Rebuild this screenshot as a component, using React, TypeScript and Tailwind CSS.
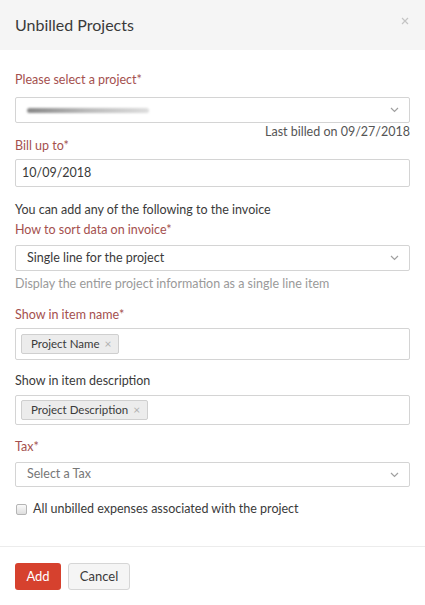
import { useState } from "react";

const labelCls = "h-[16px] text-[12.5px] leading-[16px] text-[#a4504e]";
const plainLabelCls = "h-[16px] text-[12.5px] leading-[16px] text-[#3a3a3a]";

function Chevron() {
    return (
        <svg width="9" height="6" viewBox="0 0 9 6" className="shrink-0">
            <path d="M1 1l3.5 3.5L8 1" fill="none" stroke="#a0a0a0" strokeWidth="1.2" />
        </svg>
    );
}

function SelectBox({ children, height }: { children: React.ReactNode; height: string }) {
    return (
        <div className={`flex items-center justify-between rounded-[2px] border border-[#d4d4d4] bg-white pr-[10px] pl-[11px] ${height}`}>
            <div className="text-[12.5px] text-[#3a3a3a]">{children}</div>
            <Chevron />
        </div>
    );
}

function Chip({ label }: { label: string }) {
    return (
        <span className="inline-flex h-[20px] items-center rounded-[2px] border border-[#cfcfcf] bg-[#ececec] pr-[7px] pl-[9px] text-[11.5px] text-[#3a3a3a]">
            {label}
            <span className="ml-[5px] text-[12px] text-[#b0b0b0]">×</span>
        </span>
    );
}

export default function App() {
    const [checked, setChecked] = useState(false);
    return (
        <div className="h-[605px] w-[425px] bg-white font-['Lato','Liberation_Sans',sans-serif] text-[#3a3a3a]">
            <div className="flex h-[50px] items-center justify-between bg-[#f5f5f5] pr-[16px] pl-[15px]">
                <h1 className="text-[16px] font-normal text-[#3a3a3a]">Unbilled Projects</h1>
                <svg width="8" height="8" viewBox="0 0 8 8" className="-mt-[8px]">
                    <path d="M1 1l6 6M7 1L1 7" stroke="#c4c4c4" strokeWidth="1.2" />
                </svg>
            </div>

            <div className="px-[15px] pt-[22px]">
                <div className={labelCls}>Please select a project*</div>
                <div className="mt-[9px]">
                    <SelectBox height="h-[26px]">
                        <div className="mt-[1px] h-[5px] w-[122px] rounded-full bg-gradient-to-r from-[#888] via-[#bbb] to-[#ddd] blur-[1px]" />
                    </SelectBox>
                </div>
                <div className="mt-[1px] h-[16px] text-right text-[12.5px] leading-[16px] text-[#555]">
                    Last billed on 09/27/2018
                </div>

                <div className={`${labelCls} -mt-[2px]`}>Bill up to*</div>
                <div className="mt-[5px] flex h-[28px] items-center rounded-[2px] border border-[#d4d4d4] px-[6px] text-[12.5px]">
                    10/09/2018
                </div>

                <div className={`${plainLabelCls} mt-[15px]`}>You can add any of the following to the invoice</div>
                <div className={`${labelCls} mt-[4px]`}>How to sort data on invoice*</div>
                <div className="mt-[7px]">
                    <SelectBox height="h-[26px]">Single line for the project</SelectBox>
                </div>
                <div className="mt-[5px] h-[16px] text-[12.5px] leading-[16px] text-[#9a9a9a]">
                    Display the entire project information as a single line item
                </div>

                <div className={`${labelCls} mt-[15px]`}>Show in item name*</div>
                <div className="mt-[5px] flex h-[32px] items-center rounded-[2px] border border-[#d4d4d4] px-[5px]">
                    <Chip label="Project Name" />
                </div>

                <div className={`${plainLabelCls} mt-[13px]`}>Show in item description</div>
                <div className="mt-[6px] flex h-[30px] items-center rounded-[2px] border border-[#d4d4d4] px-[5px]">
                    <Chip label="Project Description" />
                </div>

                <div className={`${labelCls} mt-[14px]`}>Tax*</div>
                <div className="mt-[7px]">
                    <SelectBox height="h-[25px]">
                        <span className="text-[#777]">Select a Tax</span>
                    </SelectBox>
                </div>

                <label className="mt-[14px] flex h-[16px] items-center text-[12.5px] text-[#3a3a3a]">
                    <span
                        onClick={() => setChecked(!checked)}
                        className="ml-[1px] mr-[6px] h-[11px] w-[11px] rounded-[2px] border border-[#b5b5b5] bg-gradient-to-b from-[#fafafa] to-[#dedede]"
                    />
                    All unbilled expenses associated with the project
                </label>
            </div>

            <div className="mt-[29px] border-t border-[#ececec] px-[15px] pt-[16px]">
                <div className="flex gap-[7px]">
                    <button className="h-[27px] w-[46px] rounded-[3px] bg-[#d6412e] text-[13px] text-white">Add</button>
                    <button className="h-[27px] w-[62px] rounded-[3px] border border-[#d6d6d6] bg-[#f5f5f5] text-[13px] text-[#3a3a3a]">
                        Cancel
                    </button>
                </div>
            </div>
        </div>
    );
}
